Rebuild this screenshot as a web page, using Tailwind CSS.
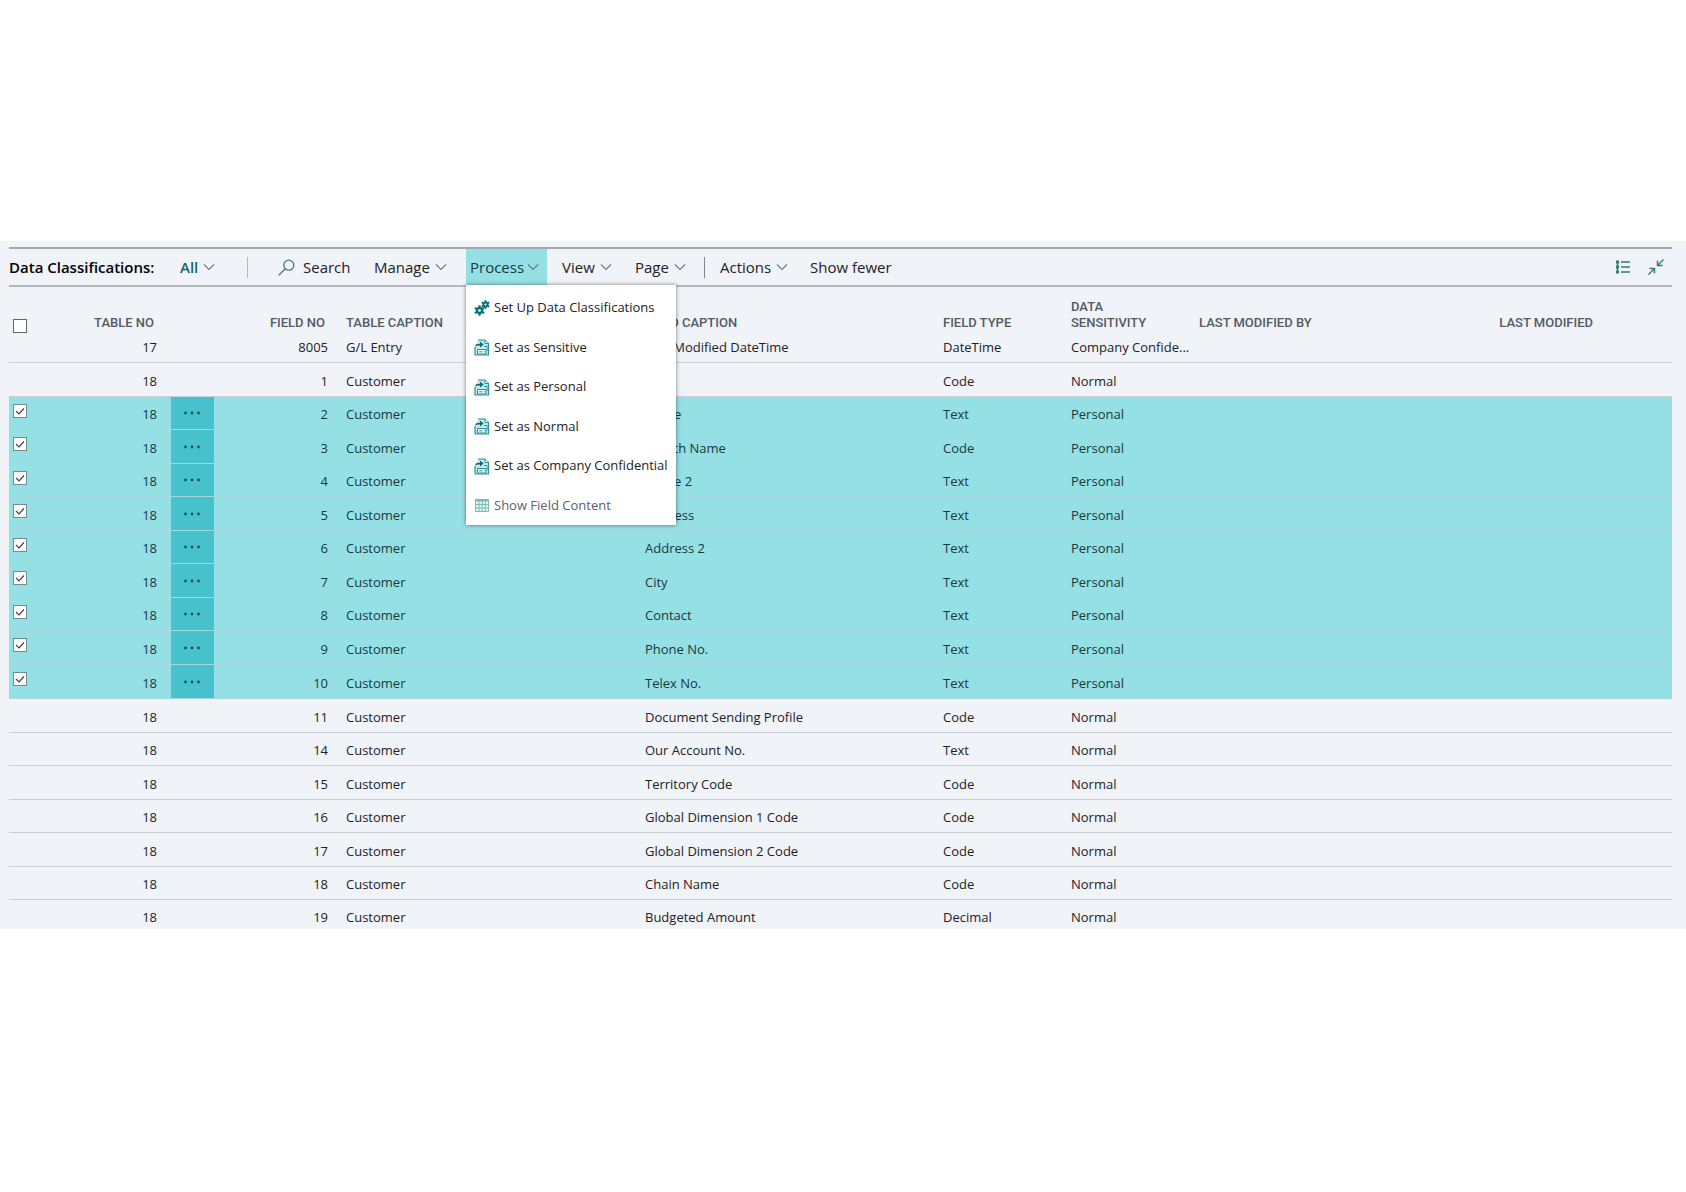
<!DOCTYPE html>
<html lang="en">
<head>
  <meta charset="UTF-8" />
  <meta name="viewport" content="width=device-width, initial-scale=1.0"/>
  <title>Data Classifications</title>
  <script src="https://cdn.jsdelivr.net/npm/@tailwindcss/browser@4"></script>
</head>
<body class="bg-white font-['Open_Sans',sans-serif] text-[#1e2125]">

  <!-- Icons -->
  <svg class="hidden">
    <symbol id="chevron" viewBox="0 0 12 8"><path d="M1 1.5 6 6.5 11 1.5" fill="none" stroke="#6b7d80" stroke-width="1.1"/></symbol>
    <symbol id="cog" viewBox="-5 -5 10 10">
      <path d="M0-4.8V4.8M-4.2-2.4 4.2 2.4M-4.2 2.4 4.2-2.4" stroke="currentColor" stroke-width="2"/>
      <circle r="2.4" fill="none" stroke="currentColor" stroke-width="2.2"/>
      <circle r="1.2" fill="#fff"/>
    </symbol>
    <symbol id="gears" viewBox="0 0 16 16">
      <use href="#cog" x="0" y="5" width="11" height="11"/>
      <use href="#cog" x="7" y="0" width="9" height="9"/>
    </symbol>
    <symbol id="docs" viewBox="0 0 16 17">
      <path d="M4 1H11L14.5 4.5V16H1V8" fill="#c5e8ea" stroke="#2e8f96" stroke-width="1.2"/>
      <path d="M11 1V4.5H14.5" fill="#fff" stroke="#2e8f96"/>
      <path d="M1 7.5C1.5 5 3.5 4.6 6 4.8V2.6L9.6 5.6 6 8.6V6.6C4 6.5 2.4 6.8 1 7.5Z" fill="#0c6a78"/>
      <path d="M3.5 10.5H12V15H3.5ZM10 7.5H13V12" fill="#eefafa" stroke="#2e8f96"/>
      <path d="M5.2 12.8H8.5M10 12.8H10.8" stroke="#2e8f96"/>
    </symbol>
    <symbol id="grid" viewBox="0 0 14 13">
      <path d="M.5.5H13.5V12.5H.5Z" fill="#e3f3f1" stroke="#7dbab5"/>
      <path d="M.5 1.5H13.5" stroke="#7dbab5" stroke-width="2"/>
      <path d="M.5 5.5H13.5M.5 9H13.5M4 1V12.5M7.2 1V12.5M10.4 1V12.5" stroke="#7dbab5"/>
    </symbol>
  </svg>

  <main class="mt-[241px] bg-[#f0f3f8] pl-[9px] pr-[14px] pt-[6px]">

    <!-- Action bar -->
    <nav class="flex h-10 items-center border-t-2 border-b-2 border-t-[#a3a9ae] border-b-[#b3b8bc] text-[15px] whitespace-nowrap">
      <h1 class="w-[171px] text-[15px] font-semibold text-black">Data Classifications:</h1>
      <button class="flex w-[67px] items-center gap-[5px] font-semibold text-[#0f6b66]">All <svg class="h-2 w-3"><use href="#chevron"/></svg></button>
      <span class="mr-[30px] h-[21px] w-px bg-[#b4babf]"></span>
      <button class="flex w-24 items-center gap-2">
        <svg class="size-[17px]" viewBox="0 0 17 17" fill="none" stroke="#3d7d7a" stroke-width="1.3"><circle cx="10.8" cy="6.2" r="5"/><path d="M7.2 9.8.8 16.2"/></svg>
        Search
      </button>
      <button class="flex w-[92px] items-center gap-[5px]">Manage <svg class="h-2 w-3"><use href="#chevron"/></svg></button>
      <div class="relative mr-[15px] h-full">
        <button class="flex h-full w-[81px] items-center gap-[3px] bg-[#95e0e4] pl-1 text-[#123c44]">Process <svg class="h-2 w-3"><use href="#chevron"/></svg></button>
        <ul class="absolute top-full left-0 z-10 w-[210px] bg-white pt-[3px] text-[13px] shadow-[0_0_4px_rgba(0,0,0,0.5)]">
          <li><button class="flex h-10 w-full items-center gap-1 pl-2"><svg class="size-4 text-[#0d6f7a]"><use href="#gears"/></svg>Set Up Data Classifications</button></li>
          <li><button class="flex h-[39px] w-full items-center gap-1 pl-2"><svg class="h-[17px] w-4"><use href="#docs"/></svg>Set as Sensitive</button></li>
          <li><button class="flex h-10 w-full items-center gap-1 pl-2"><svg class="h-[17px] w-4"><use href="#docs"/></svg>Set as Personal</button></li>
          <li><button class="flex h-[39px] w-full items-center gap-1 pl-2"><svg class="h-[17px] w-4"><use href="#docs"/></svg>Set as Normal</button></li>
          <li><button class="flex h-10 w-full items-center gap-1 pl-2"><svg class="h-[17px] w-4"><use href="#docs"/></svg>Set as Company Confidential</button></li>
          <li><button class="flex h-[39px] w-full items-center gap-1 pl-2 text-[#5b6270]"><svg class="h-[13px] w-4"><use href="#grid"/></svg>Show Field Content</button></li>
        </ul>
      </div>
      <button class="flex w-[73px] items-center gap-[5px]">View <svg class="h-2 w-3"><use href="#chevron"/></svg></button>
      <button class="flex w-[69px] items-center gap-[5px]">Page <svg class="h-2 w-3"><use href="#chevron"/></svg></button>
      <span class="mr-[15px] h-[21px] w-px bg-[#80868b]"></span>
      <button class="flex w-[90px] items-center gap-[5px]">Actions <svg class="h-2 w-3"><use href="#chevron"/></svg></button>
      <button>Show fewer</button>
      <button class="ml-auto" aria-label="List view">
        <svg class="size-[14px]" viewBox="0 0 14 14" stroke="#2f7d78" stroke-width="1.5"><path d="M0 2H3M0 7H3M0 12H3" stroke-width="3"/><path d="M1.5 1V13M5 2H14M5 7H14M5 12H14"/></svg>
      </button>
      <button class="mr-2 ml-[18px]" aria-label="Collapse">
        <svg class="size-4" viewBox="0 0 16 16" fill="none" stroke="#2f7d78" stroke-width="1.4"><path d="M15.5.5 9.5 6.5M9.5 1.5V6.5H14.5M.5 15.5 6.5 9.5M1.5 9.5H6.5V14.5"/></svg>
      </button>
    </nav>

    <!-- Field list -->
    <table class="w-full table-fixed border-collapse text-[13px] leading-5 font-medium">
      <colgroup>
        <col class="w-8"><col class="w-[130px]"><col class="w-[43px]"><col class="w-[132px]"><col class="w-[299px]">
        <col class="w-[298px]"><col class="w-32"><col class="w-32"><col class="w-[240px]"><col>
      </colgroup>
      <thead>
        <tr class="h-[46px] text-left align-bottom font-['Roboto',sans-serif] text-[13px] leading-4 text-[#555a63]">
          <th class="pl-1"><input type="checkbox" aria-label="Select all" class="block size-[14px] appearance-none border border-[#666] bg-white"></th>
          <th class="pr-[17px] pb-0.5 text-right font-medium">TABLE NO</th>
          <th></th>
          <th class="pr-[21px] pb-0.5 text-right font-medium">FIELD NO</th>
          <th class="pb-0.5 font-medium">TABLE CAPTION</th>
          <th class="pb-0.5 font-medium">FIELD CAPTION</th>
          <th class="pb-0.5 font-medium">FIELD TYPE</th>
          <th class="pb-0.5 font-medium">DATA<br>SENSITIVITY</th>
          <th class="pb-0.5 font-medium">LAST MODIFIED BY</th>
          <th class="pr-[79px] pb-0.5 text-right font-medium">LAST MODIFIED</th>
        </tr>
      </thead>
      <tbody id="rows"></tbody>
    </table>
  </main>

  <script>
    // table no, field no, table caption, field caption, type, sensitivity, selected
    const fields = [
      [17, 8005, 'G/L Entry', 'Last Modified DateTime', 'DateTime', 'Company Confide...', false],
      [18, 1, 'Customer', 'No.', 'Code', 'Normal', false],
      [18, 2, 'Customer', 'Name', 'Text', 'Personal', true],
      [18, 3, 'Customer', 'Search Name', 'Code', 'Personal', true],
      [18, 4, 'Customer', 'Name 2', 'Text', 'Personal', true],
      [18, 5, 'Customer', 'Address', 'Text', 'Personal', true],
      [18, 6, 'Customer', 'Address 2', 'Text', 'Personal', true],
      [18, 7, 'Customer', 'City', 'Text', 'Personal', true],
      [18, 8, 'Customer', 'Contact', 'Text', 'Personal', true],
      [18, 9, 'Customer', 'Phone No.', 'Text', 'Personal', true],
      [18, 10, 'Customer', 'Telex No.', 'Text', 'Personal', true],
      [18, 11, 'Customer', 'Document Sending Profile', 'Code', 'Normal', false],
      [18, 14, 'Customer', 'Our Account No.', 'Text', 'Normal', false],
      [18, 15, 'Customer', 'Territory Code', 'Code', 'Normal', false],
      [18, 16, 'Customer', 'Global Dimension 1 Code', 'Code', 'Normal', false],
      [18, 17, 'Customer', 'Global Dimension 2 Code', 'Code', 'Normal', false],
      [18, 18, 'Customer', 'Chain Name', 'Code', 'Normal', false],
      [18, 19, 'Customer', 'Budgeted Amount', 'Decimal', 'Normal', false]
    ];

    const check = (no) => `
      <label class="relative block size-[14px]">
        <input type="checkbox" checked aria-label="Select field ${no}" class="block size-[14px] appearance-none border border-[#6f8f93] bg-white">
        <svg class="pointer-events-none absolute inset-0 size-[14px]" viewBox="0 0 14 14"><path d="M3 7 6 10 11 4.5" fill="none" stroke="#444" stroke-width="1.2"/></svg>
      </label>`;

    const dots = `
      <button class="block w-full pr-0.5" aria-label="More options">
        <svg class="mx-auto h-5 w-4" viewBox="0 0 16 20" fill="#14525c"><circle cx="1.5" cy="9" r="1.4"/><circle cx="8" cy="9" r="1.4"/><circle cx="14.5" cy="9" r="1.4"/></svg>
      </button>`;

    document.getElementById('rows').innerHTML = fields.map((f, i) => {
      const [tableNo, no, table, caption, type, sensitivity, selected] = f;
      const last = i === fields.length - 1;
      let height = i % 2 || i === 10 ? 'h-[34px]' : 'h-[33px]';
      if (i === 0) height = 'h-[29px]';
      if (last) height = 'h-[30px]';
      const look = selected ? 'bg-[#95e0e4] border-[#a3d6de] text-[#17393f]' : 'border-[#cdd1d5]';
      const pad = last ? 'pb-0.5' : 'pb-[5px]';
      return `
        <tr class="${height} ${look} ${last ? '' : 'border-b'} align-bottom">
          <td class="pl-1 pt-[7px] align-top">${selected ? check(no) : ''}</td>
          <td class="${pad} pr-[14px] text-right">${tableNo}</td>
          <td class="${pad} ${selected ? 'bg-[#47c2cc]' : ''}">${selected ? dots : ''}</td>
          <td class="${pad} pr-[18px] text-right">${no}</td>
          <td class="${pad}">${table}</td>
          <td class="${pad}">${caption}</td>
          <td class="${pad}">${type}</td>
          <td class="${pad} whitespace-nowrap">${sensitivity}</td>
          <td></td>
          <td></td>
        </tr>`;
    }).join('');
  </script>
</body>
</html>
